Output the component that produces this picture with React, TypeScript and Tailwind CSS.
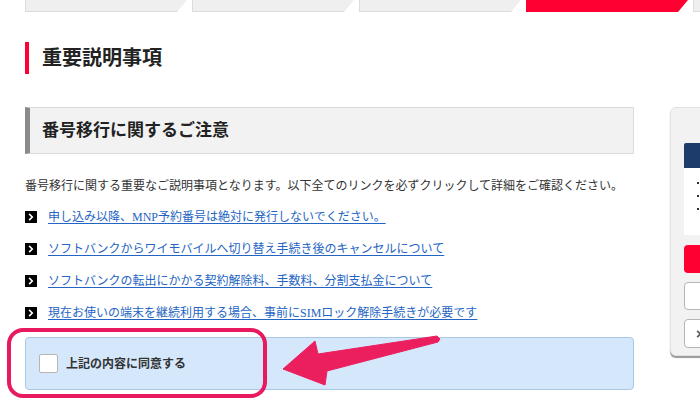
const font = { fontFamily: '"Liberation Serif", "Noto Sans CJK JP", serif' };

const links = [
  "申し込み以降、MNP予約番号は絶対に発行しないでください。",
  "ソフトバンクからワイモバイルへ切り替え手続き後のキャンセルについて",
  "ソフトバンクの転出にかかる契約解除料、手数料、分割支払金について",
  "現在お使いの端末を継続利用する場合、事前にSIMロック解除手続きが必要です",
];

const tabs = [false, false, false, true, false];

function Chevron({ className }: { className: string }) {
  return (
    <svg className={className} viewBox="0 0 12 12" fill="none" stroke="currentColor">
      <path d="M4.5 3l3 3-3 3" strokeWidth={2} strokeLinecap="square" />
    </svg>
  );
}

export default function App() {
  return (
    <div className="relative w-[700px] h-[407px] overflow-hidden bg-white text-[#333]" style={font}>
      {/* Step tabs */}
      <div className="flex gap-[5px] pl-[25px]">
        {tabs.map((active, i) => (
          <div
            key={i}
            className={
              active
                ? "w-[162px] h-[12px] shrink-0 bg-[#ff0033] [clip-path:polygon(0_0,100%_0,calc(100%-10px)_100%,0_100%)]"
                : "w-[162px] h-[12px] shrink-0 bg-[#efefef] border-l border-b border-[#dcdcdc] [clip-path:polygon(0_0,100%_0,calc(100%-10px)_100%,0_100%)]"
            }
          />
        ))}
      </div>

      <div className="flex">
        {/* Main column */}
        <div className="ml-[25px] w-[609px] shrink-0">
          <div className="mt-[30px] flex items-center gap-[13px]">
            <span className="w-[4px] h-[32px] bg-[#ff0033]" />
            <h1 className="text-[20px] font-bold leading-[32px] text-[#222]">重要説明事項</h1>
          </div>

          <div className="mt-[33px] h-[47px] flex items-center bg-[#f2f2f2] border border-[#dcdcdc] border-l-[5px] border-l-[#8a8a8a] pl-[12px]">
            <h2 className="text-[17px] font-bold text-[#222]">番号移行に関するご注意</h2>
          </div>

          <p className="mt-[22px] h-[20px] text-[12px] leading-[20px]">
            番号移行に関する重要なご説明事項となります。以下全てのリンクを必ずクリックして詳細をご確認ください。
          </p>

          <ul className="mt-[11px] flex flex-col gap-[12px]">
            {links.map((text) => (
              <li key={text} className="h-[20px] flex items-center gap-[11px]">
                <span className="w-[12px] h-[12px] bg-black text-white flex items-center justify-center shrink-0">
                  <Chevron className="w-[10px] h-[10px]" />
                </span>
                <a href="#" className="text-[12px] leading-[20px] text-[#2465c4] underline underline-offset-2">
                  {text}
                </a>
              </li>
            ))}
          </ul>

          <div className="mt-[14px] h-[53px] flex items-center gap-[8px] pl-[13px] bg-[#d5e8fb] border border-[#a9c8e6] rounded-[4px]">
            <span className="w-[19px] h-[19px] bg-white border border-[#b5b5b5] rounded-[2px]" />
            <span className="text-[12px] font-bold text-[#333]">上記の内容に同意する</span>
          </div>
        </div>

        {/* Sidebar card */}
        <div className="ml-[36px] mt-[95px] w-[240px] h-[249px] shrink-0 bg-[#f2f2f2] border border-[#e2e2e2] rounded-[6px] shadow-[0_2px_1px_rgba(0,0,0,0.4)] px-[13px] pt-[35px]">
          <div className="h-[25px] bg-[#1d3c6b] rounded-t-[2px]" />
          <div className="h-[67px] bg-white pt-[14px] pl-[13px] flex flex-col gap-[11px]">
            <span className="w-[2px] h-[2px] bg-[#333]" />
            <span className="w-[2px] h-[2px] bg-[#333]" />
            <span className="w-[2px] h-[2px] bg-[#333]" />
          </div>
          <div className="mt-[10px] h-[28px] bg-[#ff0033] rounded-[4px]" />
          <div className="mt-[9px] h-[28px] bg-white border border-[#b5b5b5] rounded-[4px]" />
          <div className="mt-[9px] h-[29px] bg-white border border-[#b5b5b5] rounded-[4px] flex items-center pl-[9px] text-[#555]">
            <Chevron className="w-[10px] h-[10px]" />
          </div>
        </div>
      </div>

      {/* Annotation: highlight box */}
      <div className="absolute left-[7px] top-[328px] w-[260px] h-[70px] border-[4px] border-[#e8195c] rounded-[16px]" />

      {/* Annotation: arrow */}
      <svg className="absolute left-0 top-0" width="700" height="407" viewBox="0 0 700 407">
        <polygon
          points="283,369 315,341 318,354 437,336 440,339 438,342 327,371 325,385"
          fill="#ec1f5e"
          stroke="#ec1f5e"
          strokeWidth={1}
          strokeLinejoin="round"
        />
      </svg>
    </div>
  );
}
